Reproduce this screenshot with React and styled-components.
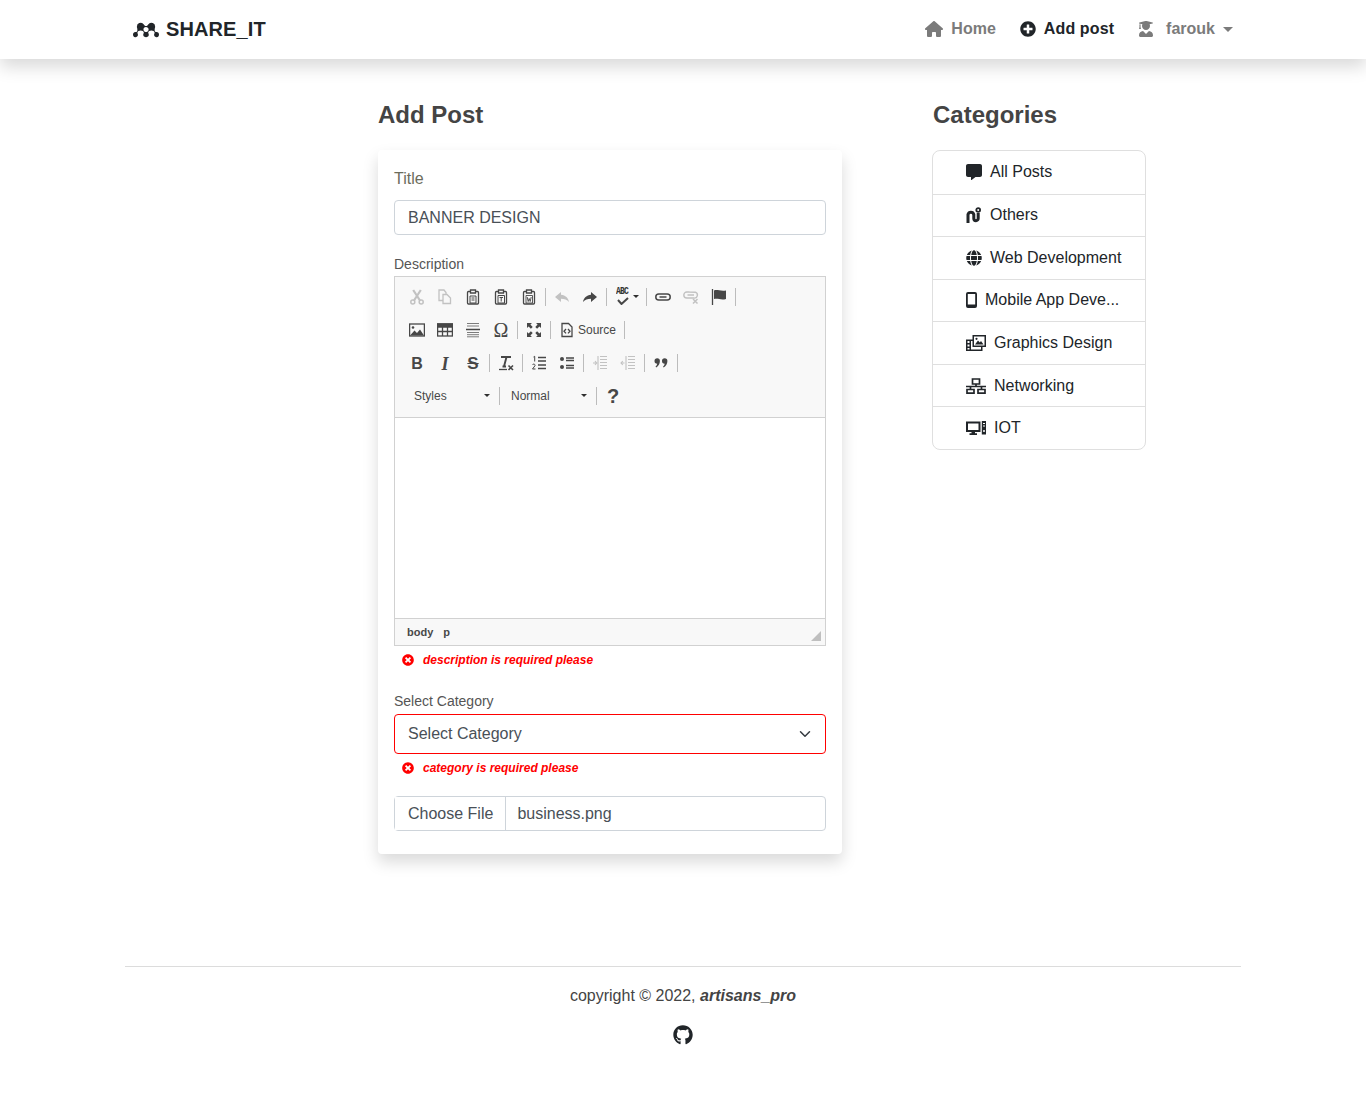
import React from 'react';
import styled, { createGlobalStyle } from 'styled-components';
import {
	FaPlusCircle,
	FaUserGraduate,
	FaCommentAlt,
	FaGlobe,
	FaGithub,
	FaTimesCircle,
} from 'react-icons/fa';
import { FaHouse } from 'react-icons/fa6';
import { SiMendeley } from 'react-icons/si';

const GlobalStyle = createGlobalStyle`
	* {
		box-sizing: border-box;
	}
	body {
		margin: 0;
		background: #fff;
		color: #444;
		font-family: 'Liberation Sans', Arial, sans-serif;
		font-size: 16px;
	}
`;

function OthersIcon() {
	return (
		<svg width='16' height='16' viewBox='0 0 16 16' fill='none' stroke='currentColor' strokeWidth='3'>
			<path d='M2 16V7.500a3 3 0 0 1 5.800 0v4a2 2 0 0 0 4.400 0V6' />
			<circle cx='12.200' cy='3' r='1.900' strokeWidth='1.800' />
		</svg>
	);
}

function MobileIcon() {
	return (
		<svg width='11' height='16' viewBox='0 0 11 16' fill='currentColor'>
			<path d='M2 0h7a2 2 0 0 1 2 2v12a2 2 0 0 1-2 2H2a2 2 0 0 1-2-2V2a2 2 0 0 1 2-2zM1.800 2v10.500h7.400V2z' fillRule='evenodd' />
		</svg>
	);
}

function GraphicsIcon() {
	return (
		<svg width='20' height='16' viewBox='0 0 20 16' fill='currentColor'>
			<path d='M6.500 0H20v12h-3.500v4H0V4.500h6.500zM8 1.500V10.500h10.500v-9zM1.500 6v2h2V6zM1.500 9.500v2h2v-2zM1.500 13v1.500h2V13zM5 6v8.500h10V12H6.500V6z' fillRule='evenodd' />
			<path d='M9 9.500 12 5.500l1.800 2 1.200-1.500 2.500 3.500z' />
			<circle cx='10.500' cy='3.800' r='1.100' />
		</svg>
	);
}

function NetworkIcon() {
	return (
		<svg width='20' height='16' viewBox='0 0 20 16' fill='none' stroke='currentColor' strokeWidth='1.700'>
			<path d='M6.500 1h7v5h-7zM10 6v2.500M0 8.500h20M1 11.500h7v3.600H1zM12 11.500h7v3.600h-7zM4.500 8.500v3M15.500 8.500v3' />
		</svg>
	);
}

function DesktopIcon() {
	return (
		<svg width='20' height='16' viewBox='0 0 20 16' fill='currentColor'>
			<path d='M0 1.500h14.500v10.500H9v1.300h2V15H3.500v-1.700h2V12H0zM2 3.500v6.500h10.500V3.500z' fillRule='evenodd' />
			<path d='M15.800 1H20v13.500h-4.200zM17 3v1h2V3zM17 5.500v1h2v-1zM18 10a1 1 0 1 0 0 2 1 1 0 0 0 0-2z' fillRule='evenodd' />
		</svg>
	);
}

const categories = [
	{ name: 'All Posts', icon: <FaCommentAlt size={16} /> },
	{ name: 'Others', icon: <OthersIcon /> },
	{ name: 'Web Development', icon: <FaGlobe size={16} /> },
	{ name: 'Mobile App Deve...', icon: <MobileIcon /> },
	{ name: 'Graphics Design', icon: <GraphicsIcon /> },
	{ name: 'Networking', icon: <NetworkIcon /> },
	{ name: 'IOT', icon: <DesktopIcon /> },
];

const CkIcon = ({ children, faded }) => (
	<svg
		width='16'
		height='16'
		viewBox='0 0 16 16'
		fill='none'
		stroke='currentColor'
		strokeWidth='1.300'
		style={{ opacity: faded ? 0.3 : 1 }}
	>
		{children}
	</svg>
);

const clipboard = (
	<path d='M5 2.500H3.500a1 1 0 0 0-1 1V14a1 1 0 0 0 1 1h9a1 1 0 0 0 1-1V3.500a1 1 0 0 0-1-1H11M5.500 1h5v3h-5z' />
);

const ckIcons = {
	cut: (
		<>
			<circle cx='3.800' cy='13' r='2' strokeWidth='1.500' />
			<circle cx='12.200' cy='13' r='2' strokeWidth='1.500' />
			<path d='M5 11.500 11.800 1M11 11.500 4.200 1' strokeWidth='2.200' />
		</>
	),
	copy: (
		<>
			<path d='M2 1h5l2 2.500v8H2z' />
			<path d='M6 5.500h4l3.500 3.500v5.500H6z' fill='#f8f8f8' />
		</>
	),
	paste: (
		<>
			{clipboard}
			<path d='M5 7h6v7H5zM6.500 9h3M6.500 11h3' strokeWidth='1' />
		</>
	),
	pasteText: (
		<>
			{clipboard}
			<path d='M5 6.500h6.500V14H5zM6.500 8.500h3.500M8.200 8.500v4' strokeWidth='1' />
		</>
	),
	pasteWord: (
		<>
			{clipboard}
			<path d='M5 6.500h6.500V14H5zM6.200 8l1 4.500 1-3 1 3 1-4.500' strokeWidth='.9' />
		</>
	),
	undo: <path d='M7 3 1 8l6 5V9.800c3.500 0 6 .7 8 3.200-.7-4-3.500-7-8-7.300z' fill='currentColor' stroke='none' />,
	redo: <path d='M9 3l6 5-6 5V9.800c-3.500 0-6 .7-8 3.200 .7-4 3.500-7 8-7.300z' fill='currentColor' stroke='none' />,
	link: (
		<path d='M6.500 5H3.800a3 3 0 0 0 0 6h8.400a3 3 0 0 0 0-6H5.500M4.500 8h7' strokeWidth='1.500' />
	),
	unlink: (
		<>
			<path d='M6.500 3H3.800a3 3 0 0 0 0 6h7a3 3 0 0 0 1.500-5.800L5.500 3M4.500 6h6.500' strokeWidth='1.400' />
			<path d='M10 10l4.500 4.500M14.500 10 10 14.500' strokeWidth='1.500' />
		</>
	),
	flag: (
		<>
			<path d='M1.500 0v16' />
			<path d='M3 1.500c3-1.500 6 1 12 0v8.500c-5 1.500-8-1-12 0z' fill='currentColor' stroke='none' />
		</>
	),
	image: (
		<>
			<rect x='.6' y='2' width='14.800' height='12' />
			<path d='M1 13.500 5.500 8.500l2.500 2.500 3-3.500 4 6z' fill='currentColor' stroke='none' />
			<circle cx='4' cy='5.500' r='1.300' fill='currentColor' stroke='none' />
		</>
	),
	table: (
		<>
			<rect x='.6' y='2' width='14.800' height='12' />
			<path d='M.6 2h14.800v3H.6z' fill='currentColor' />
			<path d='M.6 9.500h14.800M5.500 2v12M10.500 2v12' />
		</>
	),
	hr: (
		<>
			<path d='M2 1.500h12M2 4h12M2 10.500h12M2 12.700h12M2 14.800h12' strokeWidth='1' opacity='.7' />
			<path d='M1 7.500h14' strokeWidth='1.500' />
		</>
	),
	maximize: (
		<path
			d='M1 1h5L4.400 2.600 6.700 4.900 4.900 6.700 2.600 4.400 1 6zM15 1v5l-1.600-1.600-2.300 2.300-1.800-1.800 2.300-2.300L10 1zM1 15v-5l1.600 1.600 2.300-2.300 1.800 1.800-2.300 2.300L6 15zM15 15h-5l1.600-1.600-2.300-2.300 1.800-1.800 2.300 2.300L15 10z'
			fill='currentColor'
			stroke='none'
		/>
	),
	source: (
		<>
			<path d='M3 1.500h6.500l3.500 3.500v9.500H3z' />
			<path d='M7 7 5 9.200l2 2.200M9 7l2 2.200-2 2.200' />
		</>
	),
	removeFormat: (
		<>
			<path d='M3 2h10M8.500 2 6 11.500M4.500 11.500H8' strokeWidth='1.900' />
			<path d='M1 14.500h8' />
			<path d='M10.500 10.500l4.500 4.500M15 10.500 10.500 15' strokeWidth='1.600' />
		</>
	),
	numList: (
		<>
			<path d='M7 2.500h8M7 6h8M7 10h8M7 13.500h8' strokeWidth='1.300' />
			<path d='M2.500 2l1.200-.7V6.500M1.500 10c.5-1.500 3-1 2.500.7L1.500 14h3' strokeWidth='1' />
		</>
	),
	bulList: (
		<>
			<circle cx='3' cy='4' r='2' fill='currentColor' stroke='none' />
			<circle cx='3' cy='12' r='2' fill='currentColor' stroke='none' />
			<path d='M7 3h8M7 5.500h8M7 10.500h8M7 13h8' strokeWidth='1.300' />
		</>
	),
	outdent: (
		<path d='M8 1.500h7M8 4.500h7M8 7.500h7M8 10.500h7M8 13.500h7M6 1v14M1 8h3.500M3 6l1.700 2L3 10' strokeWidth='1.100' />
	),
	indent: (
		<path d='M8 1.500h7M8 4.500h7M8 7.500h7M8 10.500h7M8 13.500h7M6 1v14M1 8h3.500M2.800 6 1 8l1.800 2' strokeWidth='1.100' />
	),
	quote: (
		<path
			d='M1.500 6a2.700 2.700 0 1 1 5.400 0c0 3-1.400 5-3.700 6.500l-.7-1c1-.8 1.500-1.700 1.700-2.800A2.700 2.700 0 0 1 1.500 6zM9 6a2.700 2.700 0 1 1 5.400 0c0 3-1.400 5-3.700 6.500l-.7-1c1-.8 1.500-1.700 1.700-2.800A2.700 2.700 0 0 1 9 6z'
			fill='currentColor'
			stroke='none'
		/>
	),
};

const Tool = ({ name, faded }) => (
	<ToolButton>
		<CkIcon faded={faded}>{ckIcons[name]}</CkIcon>
	</ToolButton>
);

const App = () => {
	return (
		<>
			<GlobalStyle />
			<NavBar>
				<NavInner>
					<Brand>
						<SiMendeley size={26} />
						SHARE_IT
					</Brand>
					<NavLinks>
						<NavLink>
							<FaHouse size={18} />
							Home
						</NavLink>
						<NavLink $active>
							<FaPlusCircle size={16} />
							Add post
						</NavLink>
						<NavLink $wide>
							<FaUserGraduate size={16} />
							farouk
							<NavCaret />
						</NavLink>
					</NavLinks>
				</NavInner>
			</NavBar>

			<Main>
				<PostColumn>
					<Heading>Add Post</Heading>
					<Card>
						<TitleLabel>Title</TitleLabel>
						<TextInput readOnly value='BANNER DESIGN' />
						<FieldLabel>Description</FieldLabel>
						<Editor>
							<Toolbar>
								<ToolRow>
									<Tool name='cut' faded />
									<Tool name='copy' faded />
									<Tool name='paste' />
									<Tool name='pasteText' />
									<Tool name='pasteWord' />
									<Separator />
									<Tool name='undo' faded />
									<Tool name='redo' />
									<Separator />
									<SpellButton>
										<SpellText>ABC</SpellText>
										<svg width='16' height='16' viewBox='0 0 16 16' fill='none' stroke='currentColor' strokeWidth='2'>
											<path d='M3 11 6.500 15 13 9' />
										</svg>
										<MiniCaret />
									</SpellButton>
									<Separator />
									<Tool name='link' />
									<Tool name='unlink' faded />
									<Tool name='flag' />
									<Separator />
								</ToolRow>
								<ToolRow>
									<Tool name='image' />
									<Tool name='table' />
									<Tool name='hr' />
									<ToolButton>
										<GlyphOmega>Ω</GlyphOmega>
									</ToolButton>
									<Separator />
									<Tool name='maximize' />
									<Separator />
									<SourceButton>
										<CkIcon>{ckIcons.source}</CkIcon>
										Source
									</SourceButton>
									<Separator />
								</ToolRow>
								<ToolRow>
									<ToolButton>
										<GlyphBold>B</GlyphBold>
									</ToolButton>
									<ToolButton>
										<GlyphItalic>I</GlyphItalic>
									</ToolButton>
									<ToolButton>
										<GlyphStrike>S</GlyphStrike>
									</ToolButton>
									<Separator />
									<Tool name='removeFormat' />
									<Separator />
									<Tool name='numList' />
									<Tool name='bulList' />
									<Separator />
									<Tool name='outdent' faded />
									<Tool name='indent' faded />
									<Separator />
									<Tool name='quote' />
									<Separator />
								</ToolRow>
								<ToolRow>
									<Combo $width={94} $left={11}>
										Styles
										<MiniCaret />
									</Combo>
									<Separator />
									<Combo $width={92} $left={9}>
										Normal
										<MiniCaret />
									</Combo>
									<Separator />
									<ToolButton>
										<GlyphHelp>?</GlyphHelp>
									</ToolButton>
								</ToolRow>
							</Toolbar>
							<EditArea />
							<EditorFooter>
								<PathItem>body</PathItem>
								<PathItem>p</PathItem>
								<ResizeGrip />
							</EditorFooter>
						</Editor>
						<ErrorLine>
							<FaTimesCircle size={12} />
							description is required please
						</ErrorLine>
						<SelectLabel>Select Category</SelectLabel>
						<SelectBox>
							Select Category
							<svg width='16' height='16' viewBox='0 0 16 16' fill='none' stroke='#343a40' strokeWidth='2' strokeLinecap='round' strokeLinejoin='round'>
								<path d='m2 5 6 6 6-6' transform='translate(2 2) scale(.75)' />
							</svg>
						</SelectBox>
						<ErrorLine>
							<FaTimesCircle size={12} />
							category is required please
						</ErrorLine>
						<FileBox>
							<FileButton>Choose File</FileButton>
							<FileName>business.png</FileName>
						</FileBox>
					</Card>
				</PostColumn>

				<SideColumn>
					<Heading>Categories</Heading>
					<CategoryList>
						{categories.map((cat) => {
							return (
								<CategoryItem key={cat.name}>
									{cat.icon}
									{cat.name}
								</CategoryItem>
							);
						})}
					</CategoryList>
				</SideColumn>
			</Main>

			<Footer>
				<Copyright>
					copyright © 2022, <strong>artisans_pro</strong>
				</Copyright>
				<FaGithub size={20} color='#212529' />
			</Footer>
		</>
	);
};

const NavBar = styled.nav`
	height: 59px;
	background: #fff;
	box-shadow: 0 8px 16px rgba(0, 0, 0, 0.15);
`;

const NavInner = styled.div`
	width: 1116px;
	height: 100%;
	margin: 0 auto;
	display: flex;
	align-items: center;
	justify-content: space-between;
	padding-left: 8px;
`;

const Brand = styled.div`
	display: flex;
	align-items: center;
	gap: 7px;
	font-size: 20px;
	font-weight: 700;
	letter-spacing: 0.1px;
	color: #212529;
`;

const NavLinks = styled.div`
	display: flex;
	align-items: center;
	height: 20px;
	margin-top: -1px;
`;

const NavLink = styled.a`
	display: flex;
	align-items: center;
	gap: ${(p) => (p.$wide ? '12px' : '8px')};
	padding: 0 8px 0 16px;
	font-weight: 700;
	letter-spacing: ${(p) => (p.$active ? '0.12px' : '0')};
	color: ${(p) => (p.$active ? '#212529' : '#7b7b7b')};
`;

const NavCaret = styled.span`
	margin-left: -4px;
	border-top: 5px solid currentColor;
	border-left: 5px solid transparent;
	border-right: 5px solid transparent;
`;

const Main = styled.main`
	width: 1116px;
	margin: 0 auto;
	padding: 43px 0 0 253px;
	display: flex;
	gap: 91px;
`;

const PostColumn = styled.section`
	width: 464px;
`;

const SideColumn = styled.aside`
	width: 213px;
`;

const Heading = styled.h2`
	margin: 0 0 21px;
	height: 27px;
	font-size: 24px;
	line-height: 25px;
	font-weight: 700;
	color: #444;
`;

const Card = styled.div`
	height: 704px;
	padding: 16px;
	border-radius: 4px;
	background: #fff;
	box-shadow: 0 8px 16px rgba(0, 0, 0, 0.15);
`;

const TitleLabel = styled.label`
	display: block;
	height: 34px;
	padding-top: 1px;
	font-size: 16px;
	line-height: 24px;
	color: #6c6c5c;
`;

const FieldLabel = styled.label`
	display: block;
	margin-top: 21px;
	height: 20px;
	font-size: 14px;
	line-height: 17px;
	color: #555;
`;

const SelectLabel = styled(FieldLabel)`
	margin-top: 19px;
	height: 21px;
`;

const TextInput = styled.input`
	display: block;
	width: 100%;
	height: 35px;
	padding: 0 13px;
	border: 1px solid #ced4da;
	border-radius: 4px;
	outline: none;
	font: 16px 'Liberation Sans', Arial, sans-serif;
	color: #495057;
`;

const Editor = styled.div`
	height: 370px;
	border: 1px solid #d1d1d1;
	display: flex;
	flex-direction: column;
`;

const Toolbar = styled.div`
	height: 141px;
	padding: 3px 8px 0;
	background: #f8f8f8;
	border-bottom: 1px solid #d1d1d1;
`;

const ToolRow = styled.div`
	display: flex;
	align-items: center;
	height: 33px;
	color: #474747;
`;

const ToolButton = styled.span`
	flex: none;
	width: 28px;
	height: 24px;
	display: flex;
	align-items: center;
	justify-content: center;
`;

const SpellButton = styled(ToolButton)`
	position: relative;
	width: 35px;
	justify-content: flex-start;
	padding-left: 6px;
	gap: 2px;
`;

const SpellText = styled.span`
	position: absolute;
	left: 7px;
	top: 0;
	font-family: 'Liberation Mono', monospace;
	font-size: 8px;
	font-weight: 700;
	line-height: 12px;
	letter-spacing: -0.8px;
	transform: scaleY(1.25);
	color: #333;
`;

const SourceButton = styled(ToolButton)`
	width: 69px;
	gap: 3px;
	justify-content: flex-start;
	padding-left: 6px;
	font-size: 12px;
	color: #474747;
`;

const GlyphBold = styled.span`
	margin-top: 2px;
	font-size: 16px;
	font-weight: 700;
	line-height: 16px;
`;

const GlyphItalic = styled(GlyphBold)`
	font-family: 'Liberation Serif', serif;
	font-size: 18px;
	font-style: italic;
`;

const GlyphStrike = styled(GlyphBold)`
	font-size: 17px;
	text-decoration: line-through;
`;

const GlyphOmega = styled(GlyphBold)`
	margin-top: 0;
	font-family: 'Liberation Serif', serif;
	font-size: 20px;
	font-weight: 400;
`;

const GlyphHelp = styled(GlyphBold)`
	margin-top: 0;
	font-size: 20px;
`;

const Separator = styled.span`
	flex: none;
	width: 1px;
	height: 18px;
	margin: 0 2px;
	background: #bcbcbc;
`;

const MiniCaret = styled.span`
	flex: none;
	border-top: 3px solid #2f2f2f;
	border-left: 3px solid transparent;
	border-right: 3px solid transparent;
`;

const Combo = styled.span`
	width: ${(p) => p.$width}px;
	display: flex;
	align-items: center;
	justify-content: space-between;
	padding: 0 7px 0 ${(p) => p.$left}px;
	font-size: 12px;
	color: #484848;
`;

const EditArea = styled.div`
	flex: 1;
	background: #fff;
`;

const EditorFooter = styled.div`
	position: relative;
	height: 27px;
	display: flex;
	align-items: center;
	gap: 10px;
	padding-left: 12px;
	background: #f8f8f8;
	border-top: 1px solid #d1d1d1;
`;

const PathItem = styled.span`
	font-size: 11px;
	font-weight: 700;
	color: #484848;
`;

const ResizeGrip = styled.span`
	position: absolute;
	right: 4px;
	bottom: 4px;
	border-bottom: 10px solid #bfbfbf;
	border-left: 10px solid transparent;
`;

const ErrorLine = styled.div`
	height: 28px;
	display: flex;
	align-items: center;
	gap: 9px;
	padding-left: 8px;
	font-size: 12px;
	font-weight: 700;
	font-style: italic;
	color: #f00;
`;

const SelectBox = styled.div`
	height: 40px;
	display: flex;
	align-items: center;
	justify-content: space-between;
	padding: 0 12px 0 13px;
	border: 1px solid #f00;
	border-radius: 4px;
	font-size: 16px;
	color: #495057;
`;

const FileBox = styled.div`
	margin-top: 14px;
	height: 35px;
	display: flex;
	align-items: center;
	border: 1px solid #ced4da;
	border-radius: 4px;
	font-size: 16px;
	color: #495057;
`;

const FileButton = styled.span`
	height: 100%;
	display: flex;
	align-items: center;
	padding: 0 12px 0 13px;
	background: #fff;
	border-right: 1px solid #ced4da;
`;

const FileName = styled.span`
	padding-left: 11px;
`;

const CategoryList = styled.ul`
	list-style: none;
	margin: 0 0 0 -1px;
	padding: 0;
	border: 1px solid #dfdfdf;
	border-radius: 8px;
`;

const CategoryItem = styled.li`
	height: 42.550px;
	display: flex;
	align-items: center;
	gap: 8px;
	padding-left: 33px;
	color: #212529;
	& + & {
		border-top: 1px solid #dfdfdf;
	}
`;

const Footer = styled.footer`
	width: 1116px;
	margin: 112px auto 0;
	height: 149px;
	border-top: 1px solid #dcdcdc;
	display: flex;
	flex-direction: column;
	align-items: center;
	padding-top: 20px;
`;

const Copyright = styled.p`
	margin: 0 0 20px;
	line-height: 18px;
	color: #444;
	strong {
		font-style: italic;
	}
`;

export default App;
